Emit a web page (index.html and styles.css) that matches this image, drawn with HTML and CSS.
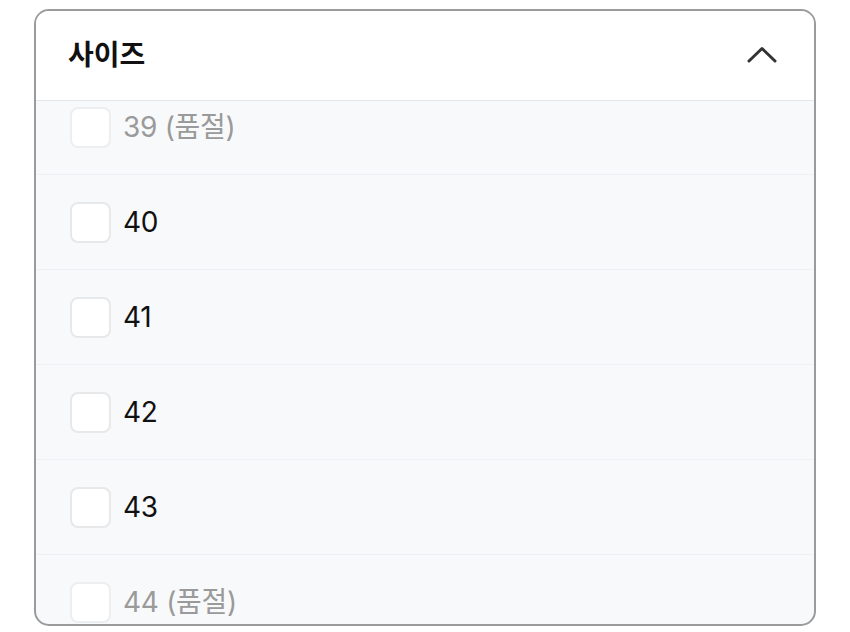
FILE: index.html
```html
<!DOCTYPE html>
<html lang="ko">
<head>
<meta charset="utf-8">
<title>사이즈</title>
<link rel="stylesheet" href="styles.css">
</head>
<body>
  <section class="filter">
    <header class="filter-head">
      <h2 class="filter-title">사이즈</h2>
      <svg class="chevron" width="30" height="18" viewBox="0 0 30 18" aria-hidden="true">
        <polyline points="2,16 15,3.5 28,16" fill="none" stroke="#333" stroke-width="3" stroke-linecap="round" stroke-linejoin="round"/>
      </svg>
    </header>
    <div class="filter-body">
      <ul class="options">
        <li class="option soldout"><span class="box"></span><span class="label">39 (품절)</span></li>
        <li class="option"><span class="box"></span><span class="label">40</span></li>
        <li class="option"><span class="box"></span><span class="label">41</span></li>
        <li class="option"><span class="box"></span><span class="label">42</span></li>
        <li class="option"><span class="box"></span><span class="label">43</span></li>
        <li class="option soldout"><span class="box"></span><span class="label">44 (품절)</span></li>
      </ul>
    </div>
  </section>
</body>
</html>
```

FILE: styles.css
```css
html, body {
  margin: 0;
  padding: 0;
  background: #ffffff;
}

body {
  padding: 9px 34px 6px;
  font-family: Inter, "Noto Sans CJK KR", "Noto Sans", sans-serif;
  color: #111111;
}

.filter {
  height: 617px;
  box-sizing: border-box;
  border: 2px solid #9b9b9b;
  border-radius: 15px;
  overflow: hidden;
  display: flex;
  flex-direction: column;
  background: #f8f9fb;
}

.filter-head {
  flex: 0 0 auto;
  height: 90px;
  box-sizing: border-box;
  display: flex;
  align-items: center;
  justify-content: space-between;
  padding: 0 37px 0 32px;
  background: #ffffff;
  border-bottom: 1px solid #e4e6e9;
}

.filter-title {
  margin: -5px 0 0;
  font-family: "Noto Sans CJK KR", sans-serif;
  font-size: 28px;
  font-weight: 700;
  color: #111111;
}

.chevron {
  display: block;
  margin-top: -3px;
}

.filter-body {
  flex: 1 1 auto;
  overflow: hidden;
}

.options {
  list-style: none;
  margin: -21px 0 0;
  padding: 0;
}

.option {
  height: 94px;
  display: flex;
  align-items: center;
  gap: 12px;
  padding-left: 34px;
  border-bottom: 1px solid #eef0f3;
}

.box {
  width: 41px;
  height: 41px;
  box-sizing: border-box;
  border: 2px solid #e7e8ea;
  border-radius: 8px;
  background: #ffffff;
  flex: 0 0 auto;
}

.label {
  font-size: 28px;
  line-height: 1;
  letter-spacing: -0.3px;
  color: #111111;
}

.soldout .label {
  color: #9a9a9a;
}

.soldout .box {
  border-color: #eceef0;
}
```
